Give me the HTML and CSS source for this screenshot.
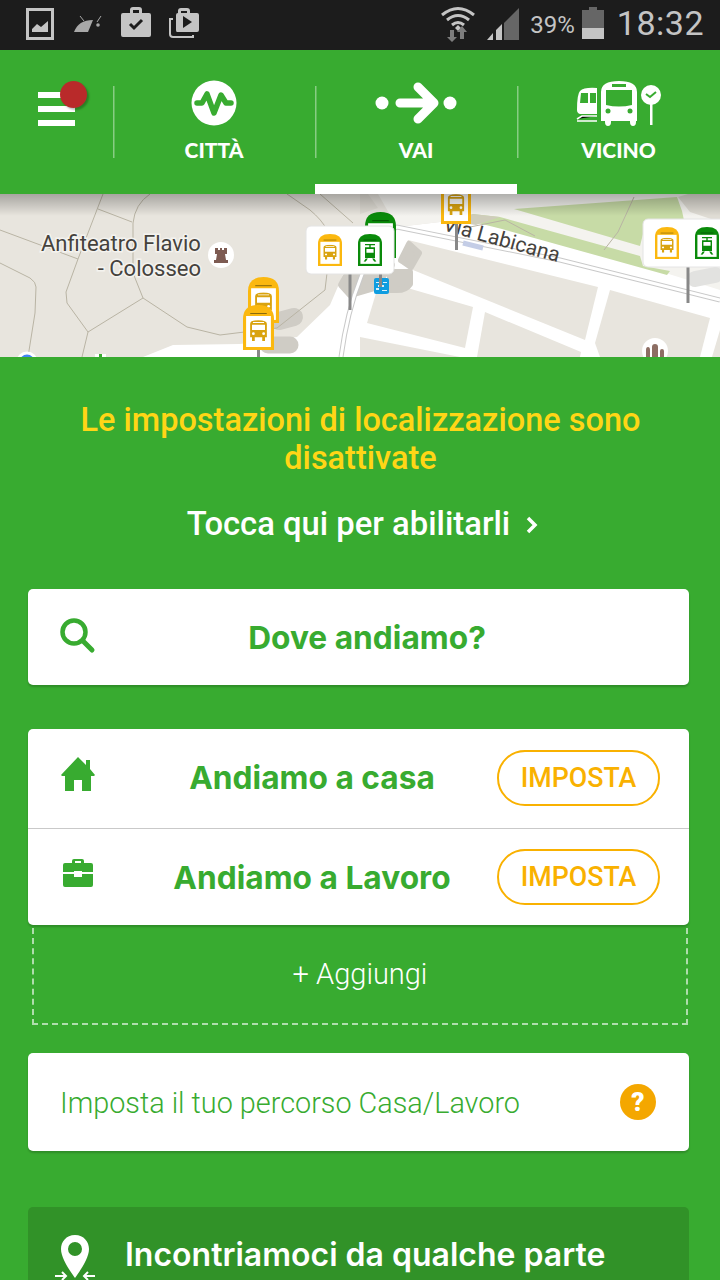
FILE: index.html
```html
<!DOCTYPE html>
<html lang="en">

<head>
    <meta charset="UTF-8">
    <meta name="viewport" content="width=device-width, initial-scale=1.0">
    <title>Vai</title>
    <link rel="stylesheet" href="styles.css">
</head>

<body>
    <!-- Status bar -->
    <div class="status-bar">
        <svg class="st-picture" width="28" height="32" viewBox="0 0 28 32">
            <path fill="#c4c4c4" fill-rule="evenodd" d="M0 0h28v32H0zM3 3v26h22V3z" />
            <path fill="#c4c4c4" d="M6 24v-3l5-5 4 3 7-6v11z" />
        </svg>
        <svg class="st-android" width="28" height="18" viewBox="0 0 28 18">
            <path fill="#a8a8a8" d="M0 17C3 9 9 5 19 5l-5 12z" />
            <circle cx="24" cy="10" r="1.800" fill="#a8a8a8" />
            <path stroke="#a8a8a8" stroke-width="1" d="M6 1l4 5M27 1l-4 6" />
        </svg>
        <svg class="st-bag" width="30" height="30" viewBox="0 0 30 30">
            <path fill="#c4c4c4" d="M9 6V3q0-3 3-3h6q3 0 3 3v3h7q2 0 2 2v20q0 2-2 2H2q-2 0-2-2V8q0-2 2-2zM12 6h6V3h-6z" />
            <path fill="none" stroke="#1c1c1c" stroke-width="3" d="M9 17l4 4 8-8" />
        </svg>
        <svg class="st-media" width="30" height="30" viewBox="0 0 30 30">
            <path fill="#c4c4c4" d="M9 5V3q0-3 3-3h6q3 0 3 3v2h7q2 0 2 2v15q0 2-2 2H8q-1 0-1-2V7q0-2 2-2zM12 5h6V3h-6z" />
            <path fill="none" stroke="#c4c4c4" stroke-width="2" d="M4 11H1v15q0 3 3 3h20v-2" />
            <path fill="#1c1c1c" d="M14 8l9 6-9 6z" />
        </svg>
        <div class="status-spacer"></div>
        <svg class="st-wifi" width="34" height="36" viewBox="0 0 34 36">
            <path fill="none" stroke="#c4c4c4" stroke-width="3" d="M1 9q16-13 32 0M6 14q11-9 22 0M11 19q6-5 12 0" />
            <path fill="#c4c4c4" d="M14 22l3-3 3 3-3 3z" />
            <path fill="#7d7d7d" d="M9 24h4v7h3l-5 5-5-5h3z" />
            <path fill="#7d7d7d" d="M21 20l5 6h-3v7h-4v-7h-3z" />
        </svg>
        <svg class="st-signal" width="32" height="32" viewBox="0 0 32 32">
            <path fill="#666" d="M17 15L32 0v32H17z" />
            <path fill="#c4c4c4" d="M9 22l6-6v16H9zM0 32l6-7v7z" />
        </svg>
        <span class="st-battery-text">39%</span>
        <svg class="st-battery" width="22" height="32" viewBox="0 0 22 32">
            <path fill="#666" d="M7 0h8v3h7v18H0V3h7z" />
            <rect y="21" width="22" height="11" fill="#c4c4c4" />
        </svg>
        <span class="st-time">18:32</span>
    </div>

    <!-- Top navigation -->
    <header class="top-nav">
        <div class="menu-cell">
            <div class="burger">
                <span></span>
                <span></span>
                <span></span>
                <i class="burger-badge"></i>
            </div>
        </div>
        <div class="tab">
            <svg width="46" height="46" viewBox="0 0 46 46">
                <circle cx="23" cy="23" r="22.500" fill="#fff" />
                <path fill="none" stroke="#38ab30" stroke-width="5.500" stroke-linecap="round" stroke-linejoin="round"
                    d="M6 23h5l5-9 7 19 7-18 5 8h5" />
            </svg>
            <span>CITTÀ</span>
        </div>
        <div class="tab tab-active">
            <svg width="82" height="46" viewBox="0 0 82 46">
                <circle cx="7" cy="23" r="6.500" fill="#fff" />
                <circle cx="75" cy="23" r="6.500" fill="#fff" />
                <path fill="none" stroke="#fff" stroke-width="9" stroke-linecap="round" stroke-linejoin="round"
                    d="M25 23h30M43 7l16 16-16 16" />
            </svg>
            <span>VAI</span>
        </div>
        <div class="tab">
            <svg width="86" height="46" viewBox="0 0 86 46">
                <path fill="#fff" d="M21 8q-13-1-17 3-3 3-3 19 0 3 3 4h17zM5 13h7v10H4zM14 13h6v10h-6z" fill-rule="evenodd" />
                <path stroke="#fff" stroke-width="1.500" d="M1 39l5-3h15M1 41h20" />
                <path fill="#fff" fill-rule="evenodd" d="M25 12q0-11 18-11t18 11v29h-1v1q0 4-3 4t-3-4v-1H35v1q0 4-3 4t-3-4v-1h-4zM30 10v15q13 3 26 0V10zM36 4v3h14V4z" />
                <circle cx="32" cy="31" r="2.500" fill="#38ab30" />
                <circle cx="54" cy="31" r="2.500" fill="#38ab30" />
                <circle cx="75" cy="15" r="10" fill="#fff" />
                <path fill="none" stroke="#38ab30" stroke-width="2" d="M70 14l4 3 6-5" />
                <rect x="74" y="24" width="2.500" height="21" fill="#fff" />
            </svg>
            <span>VICINO</span>
        </div>
    </header>

    <!-- Map -->
    <div class="map-box">
        <svg class="map" width="720" height="163" viewBox="0 194 720 163">
            <defs>
                <linearGradient id="topShade" x1="0" y1="0" x2="0" y2="1">
                    <stop offset="0" stop-color="#000" stop-opacity=".28" />
                    <stop offset="1" stop-color="#000" stop-opacity="0" />
                </linearGradient>
                <symbol id="busIcon" viewBox="0 0 20 24">
                    <path fill="#d9a30f" fill-rule="evenodd" d="M1 4q0-4 9-4t9 4v15h-2v4h-3v-4H6v4H3v-4H1zM3 5v6h14V5zM4 2v1h12V2z" />
                    <circle cx="4.500" cy="15" r="1.500" fill="#fff" />
                    <circle cx="15.500" cy="15" r="1.500" fill="#fff" />
                </symbol>
                <symbol id="tramIcon" viewBox="0 0 20 28">
                    <path fill="#0a8a0a" fill-rule="evenodd" d="M3 0h14v2H11v3h6v17H3V5h6V2H3zM5 8v6h10V8z" />
                    <path fill="#0a8a0a" d="M4 23h3l-3 5H1zM13 23h3l3 5h-3z" />
                </symbol>
                <symbol id="pinYellow" viewBox="0 0 30 45" preserveAspectRatio="none">
                    <path fill="#fbb80f" d="M0 45V14Q0 0 15 0t15 14v31z" />
                    <rect x="3" y="11" width="24" height="31" fill="#fff" />
                    <rect x="7" y="8" width="16" height="1" fill="#8a6a0a" />
                    <use href="#busIcon" x="6" y="15" width="18" height="22" />
                </symbol>
                <symbol id="pinGreen" viewBox="0 0 30 45" preserveAspectRatio="none">
                    <path fill="#0a8a0a" d="M0 45V14Q0 0 15 0t15 14v31z" />
                    <rect x="3" y="11" width="24" height="31" fill="#fff" />
                    <rect x="7" y="8" width="16" height="1" fill="#064f06" />
                    <use href="#tramIcon" x="6" y="14" width="18" height="25" />
                </symbol>
            </defs>

            <rect x="0" y="194" width="720" height="163" fill="#e8e5de" />

            <!-- roads and park -->
            <path fill="#fff" d="M143 357l30-12 67-1 57-7 33-32 15-35 35-35 17-8 43-5 33-8 87 26 110 32 50 16v69z" />
            <path fill="#f4f3ef" d="M378 194h342v96L560 240l-87-26-33 8-43 5z" />
            <path fill="#dfdcd4" d="M678 197l10-3h32v28l-30-10z" />
            <path fill="#dfdcd4" d="M360 194h8l10 14-18 6z" />
            <path fill="#c7dba6" d="M514 209l163-12 5 14 3 14-40 1-5 20z" />
            <path fill="#c7dba6" d="M473 214l27 3 140 39 3 10 27 5-3 4-165-46-36-9z" />
            <path fill="#cfcdbb" d="M472 214l28 3-24 8-20-3z" />

            <!-- blocks -->
            <path fill="#e8e5de" d="M398 262l10-22 190 47-13 53-172-70z" />
            <path fill="#e8e5de" d="M367 323l13-43 93 27-8 41z" />
            <path fill="#e8e5de" d="M485 312l96 40-1 5H477z" />
            <path fill="#e8e5de" d="M610 290l100 28-10 39H600l-5-14z" />
            <path fill="#e8e5de" d="M360 337l100 20H360z" />
            <path fill="#e8e5de" d="M720 330l-8 27h8z" />

            <!-- building shadows -->
            <g fill="#cfccc5" stroke="#cfccc5" stroke-width="6" stroke-linejoin="round">
                <path d="M341 285l11-20h40l-18 23-24 7z" />
                <path d="M401 260l8-16 10 9-8 14z" />
                <path d="M390 272l20 0v12q-4 6-13 6h-7z" />
            </g>
            <g stroke="#cfccc5" stroke-linecap="round" fill="none">
                <path stroke-width="18" d="M279 321l15-4" />
                <path stroke-width="17" d="M268 345h22" />
                <path stroke="#e2e2e0" stroke-width="16" d="M695 279l20-4" />
            </g>

            <!-- thin paths -->
            <g fill="none" stroke="#b9b4a4" stroke-width="1">
                <path d="M103 194L78 259l-12 33 1 11 21 29-6 25" />
                <path d="M0 230l78 29" />
                <path d="M98 209l34 13" />
                <path d="M150 194q-15 10-17 29v50l10 25-55 34" />
                <path d="M143 298l44 29 33 8 57-7 48-38 2-17" />
                <path d="M0 263l30 15q6 4 6 9l-1 26-7 44" />
                <path d="M287 194l23 16q12 10 17 20" />
                <path d="M320 194l33 29" />
                <path d="M634 197l-16 35-14 18" />
                <path d="M465 228l40-8 30 16" />
            </g>

            <!-- rail line -->
            <g fill="none">
                <path stroke="#c9c9c9" stroke-width="5" d="M341 357q6-45 20-80 14-40 36-50l163 33 160 40" />
                <path stroke="#fff" stroke-width="3" d="M341 357q6-45 20-80 14-40 36-50l163 33 160 40" />
            </g>

            <!-- labels -->
            <path stroke="#c4cde6" stroke-width="5" fill="none" d="M463 243l20 5" />
            <text class="map-label" x="41" y="251">Anfiteatro Flavio</text>
            <text class="map-label" x="201" y="276" text-anchor="end">- Colosseo</text>
            <text class="map-label map-street" transform="translate(442 230) rotate(15.500)">Via Labicana</text>

            <circle cx="221" cy="255" r="13" fill="#fff" />
            <path fill="#7d5b52" d="M215 248h3v2h2v-2h2v2h2v-2h3v6h-2l1 6h2v3h-14v-3h2l1-6h-2z" />
            <circle cx="655" cy="351" r="13" fill="#fff" />
            <path fill="#8d6e63" d="M646 357v-7q0-3 2-3t2 3v7zM652 357v-10q0-3 3-3t3 3v10zM660 357v-6q0-2 2-2t2 2v6z" />

            <circle cx="27" cy="362" r="9" fill="#4285f4" stroke="#fff" stroke-width="3" />
            <rect x="95" y="354" width="11" height="3" fill="#fff" />
            <rect x="99" y="354" width="3" height="3" fill="#38ab30" />

            <!-- pins -->
            <rect x="348.500" y="270" width="3" height="40" fill="#888" />
            <rect x="686.500" y="263" width="3" height="40" fill="#888" />
            <rect x="455" y="220" width="3" height="30" fill="#888" />
            <rect x="257" y="345" width="3" height="12" fill="#888" />
            <rect x="374" y="278" width="15" height="16" rx="2" fill="#0f9de0" />
            <path fill="#d8f0fb" d="M376 282h5v1h-5zM383 282h4v1h-4zM378 285h6v2h-6zM376 288h3v2h-3zM382 290h5v1h-5z" />
            <rect x="379" y="270" width="3" height="17" fill="#888" />

            <use href="#pinGreen" x="365" y="212" width="31" height="46" />
            <use href="#pinYellow" x="441" y="179" width="30" height="45" />
            <use href="#pinYellow" x="248" y="277" width="31" height="46" />
            <use href="#pinYellow" x="243" y="305" width="31" height="45" />

            <rect class="map-popup" x="306" y="226" width="88" height="48" rx="5" />
            <use href="#pinYellow" x="318" y="234" width="24" height="32" />
            <use href="#pinGreen" x="358" y="234" width="24" height="32" />

            <rect class="map-popup" x="643" y="219" width="100" height="48" rx="5" />
            <use href="#pinYellow" x="655" y="227" width="24" height="32" />
            <use href="#pinGreen" x="695" y="227" width="24" height="32" />

            <rect x="0" y="194" width="720" height="22" fill="url(#topShade)" />
        </svg>
    </div>

    <!-- Main content -->
    <main class="content">
        <p class="notice">Le impostazioni di localizzazione sono disattivate</p>
        <p class="enable-link">Tocca qui per abilitarli
            <svg width="12" height="20" viewBox="0 0 12 20">
                <path fill="none" stroke="#fff" stroke-width="3.500" d="M2 3l7 7-7 7" />
            </svg>
        </p>

        <div class="card search-card">
            <div class="row-icon">
                <svg width="36" height="36" viewBox="0 0 36 36">
                    <circle cx="14" cy="14" r="11.500" fill="none" stroke="#38ab30" stroke-width="4.500" />
                    <path stroke="#38ab30" stroke-width="5" stroke-linecap="round" d="M23 23l9 9" />
                </svg>
            </div>
            <div class="row-title">Dove andiamo?</div>
        </div>

        <div class="card place-card">
            <div class="place-row">
                <div class="row-icon">
                    <svg width="34" height="34" viewBox="0 0 34 34">
                        <path fill="#38ab30" d="M17 0l8 8V3h4v9l5 6-1 1h-3v15h-9V23h-8v11H4V19H1l-1-1z" />
                    </svg>
                </div>
                <div class="row-title">Andiamo a casa</div>
                <button class="set-button">IMPOSTA</button>
            </div>
            <div class="place-row">
                <div class="row-icon">
                    <svg width="30" height="30" viewBox="0 0 30 30">
                        <path fill="#38ab30" d="M9 5V3q0-2 2-2h8q2 0 2 2v2h7q2 0 2 2v7H19v-1h-8v1H0V7q0-2 2-2zM12 5h6V3h-6z" />
                        <path fill="#38ab30" d="M0 16h11v3h8v-3h11v11q0 2-2 2H2q-2 0-2-2z" />
                    </svg>
                </div>
                <div class="row-title">Andiamo a Lavoro</div>
                <button class="set-button">IMPOSTA</button>
            </div>
        </div>

        <div class="add-box">+ Aggiungi</div>

        <div class="card help-card">
            <span class="help-text">Imposta il tuo percorso Casa/Lavoro</span>
            <span class="help-icon">?</span>
        </div>

        <div class="meet-card">
            <svg width="40" height="46" viewBox="0 0 40 46">
                <path fill="#fff" fill-rule="evenodd" d="M20 0c9 0 14 7 14 14 0 9-9 22-14 29C15 36 6 23 6 14 6 7 11 0 20 0zm0 7a7 7 0 1 0 0 14 7 7 0 0 0 0-14z" />
                <path fill="none" stroke="#fff" stroke-width="2" d="M0 41h11M7 37l4 4-4 4M40 41H29M33 37l-4 4 4 4" />
            </svg>
            <span>Incontriamoci da qualche parte</span>
        </div>
    </main>
</body>

</html>
```

FILE: styles.css
```css
html,
body {
    height: 1280px;
    overflow: hidden;
}

body {
    margin: 0;
    background-color: #38ab30;
    font-family: Roboto, sans-serif;
}

/* Status bar */
.status-bar {
    display: flex;
    align-items: flex-start;
    height: 50px;
    background-color: #1c1c1c;
    color: #c4c4c4;
}

.st-picture {
    margin: 8px 0 0 26px;
}

.st-android {
    margin: 15px 0 0 20px;
}

.st-bag {
    margin: 7px 0 0 19px;
}

.st-media {
    margin: 8px 0 0 18px;
}

.status-spacer {
    flex: 1;
}

.st-wifi {
    margin: 6px 0 0 0;
}

.st-signal {
    margin: 8px 0 0 12px;
}

.st-battery-text {
    margin: 11px 0 0 11px;
    font-size: 24px;
    line-height: 28px;
}

.st-battery {
    margin: 7px 0 0 7px;
}

.st-time {
    margin: 3px 16px 0 13px;
    font-size: 34px;
    line-height: 40px;
    letter-spacing: .5px;
}

/* Top navigation */
.top-nav {
    display: flex;
    height: 144px;
    background-color: #38ab30;
}

.menu-cell {
    width: 113px;
    padding: 42px 0 0 38px;
    box-sizing: border-box;
}

.burger {
    position: relative;
    width: 37px;
}

.burger span {
    display: block;
    height: 6px;
    margin-bottom: 8px;
    background-color: #fff;
}

.burger-badge {
    position: absolute;
    left: 22px;
    top: -11px;
    width: 27px;
    height: 27px;
    border-radius: 50%;
    background-color: #b92a2a;
    box-shadow: 2px 2px 2px rgba(0, 0, 0, 0.25);
}

.tab {
    display: flex;
    flex-direction: column;
    align-items: center;
    width: 202px;
    padding-top: 30px;
    box-sizing: border-box;
    background: linear-gradient(rgba(255, 255, 255, 0.4), rgba(255, 255, 255, 0.4)) no-repeat -1px 36px / 2.5px 72px;
    color: #fff;
    font-family: Lato, sans-serif;
    font-weight: 900;
    font-size: 21px;
    line-height: 26px;
}

.tab:last-child {
    flex: 1;
}

.tab svg {
    display: block;
    height: 46px;
    margin-bottom: 11px;
}

.tab-active {
    box-shadow: inset 0 -10px 0 #fff;
}

/* Map */
.map-box {
    height: 163px;
    overflow: hidden;
}

.map {
    display: block;
}

.map-label {
    font-family: Roboto, sans-serif;
    font-size: 22px;
    fill: #45423d;
    stroke: #f4f3ef;
    stroke-width: 3px;
    paint-order: stroke;
}

.map-street {
    font-size: 21px;
    stroke: none;
}

.map-popup {
    fill: #fff;
    stroke: #e4e4e4;
    stroke-width: 1;
}

/* Main content */
.content {
    padding: 44px 31px 0 28px;
}

.notice {
    margin: 0 0 27px;
    padding: 0 20px 0 24px;
    text-align: center;
    color: #ffd616;
    font-size: 32.500px;
    line-height: 38px;
    font-weight: 500;
}

.enable-link {
    margin: 0 0 45px;
    padding-left: 8px;
    text-align: center;
    color: #fff;
    font-size: 32.800px;
    line-height: 40px;
    font-weight: 500;
}

.enable-link svg {
    margin-left: 8px;
}

.card {
    background-color: #fff;
    border-radius: 5px;
    box-shadow: 0 2px 2px rgba(0, 0, 0, 0.18);
}

.search-card {
    display: flex;
    align-items: center;
    height: 96px;
    margin-bottom: 44px;
    padding: 0 82px 0 32px;
}

.row-icon {
    flex: none;
    width: 67px;
    display: flex;
    align-self: flex-start;
}

.search-card .row-icon {
    margin-top: 29px;
}

.row-title {
    flex: 1;
    text-align: center;
    color: #38ab30;
    font-family: Inter, sans-serif;
    font-weight: 700;
    font-size: 31.700px;
}

.place-card {
    height: 196px;
}

.place-row {
    display: flex;
    align-items: center;
    height: 98px;
    padding: 0 29px 2px 32px;
    box-sizing: border-box;
}

.place-row:first-child {
    height: 100px;
    border-bottom: 1px solid #c9c9c9;
}

.place-row .row-icon {
    margin-top: 28px;
}

.place-row:first-child .row-icon {
    padding-left: 1px;
    width: 66px;
}

.place-row:last-child .row-icon {
    margin-top: 29px;
    padding-left: 3px;
    width: 64px;
}

.set-button {
    flex: none;
    width: 163px;
    height: 56px;
    padding: 0;
    background: #fff;
    border: 2px solid #f9b100;
    border-radius: 28px;
    color: #f9b100;
    font-family: Roboto, sans-serif;
    font-size: 26.800px;
    font-weight: 500;
}

.add-box {
    height: 95px;
    margin: 3px 1px 28px 4px;
    border: 2px dashed rgba(255, 255, 255, 0.6);
    border-top: none;
    color: #fff;
    text-align: center;
    font-size: 29px;
    font-weight: 300;
    line-height: 92px;
}

.help-card {
    display: flex;
    align-items: center;
    justify-content: space-between;
    height: 98px;
    margin-bottom: 56px;
    padding: 0 33px 0 32px;
}

.help-text {
    padding-top: 2px;
    color: #38ab30;
    font-size: 28.800px;
    font-weight: 300;
}

.help-icon {
    width: 36px;
    height: 36px;
    border-radius: 50%;
    background-color: #f4a700;
    color: #fff;
    text-align: center;
    font-size: 26px;
    font-weight: 900;
    line-height: 36px;
}

.meet-card {
    display: flex;
    align-items: flex-start;
    height: 110px;
    padding: 28px 0 0 27px;
    box-sizing: border-box;
    background-color: #319228;
    border-radius: 5px 5px 0 0;
    color: #fff;
    font-family: Inter, sans-serif;
    font-weight: 600;
    font-size: 32px;
}

.meet-card svg {
    margin-right: 30px;
}

.meet-card span {
    line-height: 40px;
}
```
